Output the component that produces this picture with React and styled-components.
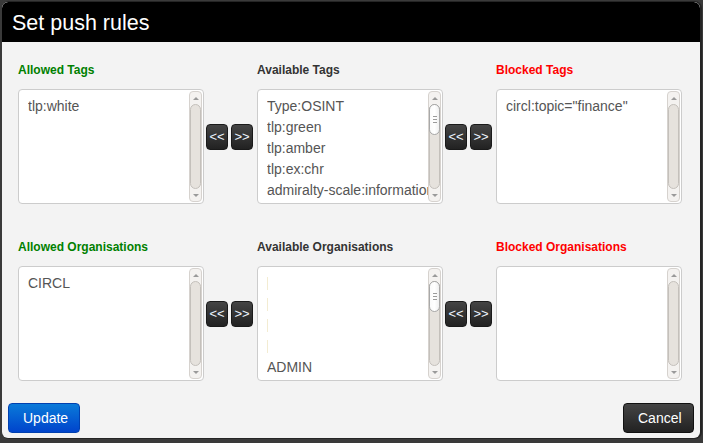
import React from "react";
import styled, { createGlobalStyle } from "styled-components";

const Global = createGlobalStyle`
  html, body { margin: 0; padding: 0; background: #3a3a3a; }
  body { font-family: "Liberation Sans", Arial, Helvetica, sans-serif; }
  #root { width: 703px; height: 443px; overflow: hidden; }
`;

const Modal = styled.div`
  margin: 2px 0 0 2px;
  width: 698px;
  height: 436px;
  background: #f3f3f3;
  border-radius: 6px;
  box-shadow: 1px 0 0 1px rgba(0,0,0,0.35);
  display: flex;
  flex-direction: column;
  overflow: hidden;
`;

const Header = styled.div`
  height: 40px;
  background: #000;
  color: #fff;
  font-size: 21.5px;
  line-height: 42px;
  padding-left: 10px;
  border-radius: 6px 6px 0 0;
`;

const Body = styled.div`
  flex: 1;
  padding: 20px 0 0 16px;
  display: flex;
  flex-direction: column;
  gap: 35px;
`;

const Section = styled.div`
  display: grid;
  grid-template-columns: 186px 53px 186px 53px 186px;
  grid-template-rows: 16px 115px;
  row-gap: 11px;
`;

const Label = styled.div`
  font-size: 12px;
  font-weight: bold;
  line-height: 16px;
  color: ${p => p.$tone === "green" ? "#008000" : p.$tone === "red" ? "#ff0000" : "#333"};
  grid-column: ${p => p.$col};
  grid-row: 1;
`;

const Box = styled.div`
  box-sizing: border-box;
  height: 115px;
  background: #fff;
  border: 1px solid #cccccc;
  border-radius: 4px;
  display: flex;
  grid-row: 2;
`;

const List = styled.div`
  flex: 1;
  min-width: 0;
  overflow: hidden;
  padding: 6px 0 0 9px;
  font-size: 14px;
  line-height: 21px;
  color: #555;
  white-space: nowrap;
  text-overflow: clip;
`;

const Option = styled.div`
  height: 21px;
  display: flex;
  align-items: center;
  overflow: hidden;
`;

const Blank = styled.span`
  display: inline-block;
  width: 1px;
  height: 13px;
  background: #f3ecd2;
`;

const Scroll = styled.div`
  width: 13px;
  margin: 1px 1px 1px 0;
  display: flex;
  flex-direction: column;
  background: #f4f2f0;
  border: 1px solid #d6d2ce;
  border-radius: 4px;
  box-sizing: border-box;
`;

const Arrow = styled.div`
  height: 12px;
  display: flex;
  align-items: center;
  justify-content: center;
  &::after {
    content: "";
    width: 0;
    height: 0;
    border-left: 3px solid transparent;
    border-right: 3px solid transparent;
    ${p => p.$down ? "border-top: 3px solid #9a9a9a;" : "border-bottom: 3px solid #9a9a9a;"}
  }
`;

const Trough = styled.div`
  flex: 1;
  background: #e6e2dd;
  border: 1px solid #c4c0bb;
  border-radius: 6px;
  display: flex;
  flex-direction: column;
`;

const Thumb = styled.div`
  height: 29px;
  margin: -1px -1px 0;
  background: linear-gradient(to right, #fafafa, #ffffff 50%, #f0f0f0);
  border: 1px solid #a8a8a8;
  border-radius: 6px;
  display: flex;
  flex-direction: column;
  align-items: center;
  justify-content: center;
  gap: 2px;
  span { display: block; width: 4px; height: 1px; background: #9a9a9a; }
`;

const Mover = styled.div`
  display: flex;
  gap: 3px;
  padding: 35px 0 0 2px;
  align-self: start;
  grid-row: 2;
`;

const ArrowBtn = styled.div`
  width: 22px;
  height: 26px;
  box-sizing: border-box;
  border-radius: 4px;
  background: linear-gradient(#444, #222);
  border: 1px solid #1a1a1a;
  color: #eef5ff;
  font-size: 13px;
  line-height: 24px;
  text-align: center;
  letter-spacing: 0;
`;

const Footer = styled.div`
  display: flex;
  justify-content: space-between;
  padding: 0 6px 5px 6px;
`;

const Btn = styled.div`
  height: 30px;
  box-sizing: border-box;
  border-radius: 4px;
  padding: 0 14px;
  font-size: 14px;
  line-height: 29px;
  color: #fff;
  background: ${p => p.$primary ? "linear-gradient(#0a7ad9, #0044cc)" : "linear-gradient(#444, #222)"};
  border: 1px solid ${p => p.$primary ? "#0040b0" : "#111"};
  width: ${p => p.$w}px;
  text-align: center;
`;

function Scrollbar({ thumb }) {
  return (
    <Scroll>
      <Arrow />
      <Trough>
        {thumb && (
          <Thumb>
            <span /><span /><span />
          </Thumb>
        )}
      </Trough>
      <Arrow $down />
    </Scroll>
  );
}

function SelectBox({ items, thumb }) {
  return (
    <Box>
      <List>
        {items.map((it, i) => (
          <Option key={i}>{it === "" ? <Blank /> : it}</Option>
        ))}
      </List>
      <Scrollbar thumb={thumb} />
    </Box>
  );
}

function Movers() {
  return (
    <Mover>
      <ArrowBtn>&lt;&lt;</ArrowBtn>
      <ArrowBtn>&gt;&gt;</ArrowBtn>
    </Mover>
  );
}

function Transfer({ what, allowed, available, blocked }) {
  return (
    <Section>
      <Label $tone="green" $col="1">Allowed {what}</Label>
      <Label $col="3">Available {what}</Label>
      <Label $tone="red" $col="5">Blocked {what}</Label>
      <SelectBox items={allowed} />
      <Movers />
      <SelectBox thumb items={available} />
      <Movers />
      <SelectBox items={blocked} />
    </Section>
  );
}

export default function App() {
  return (
    <>
      <Global />
      <Modal>
        <Header>Set push rules</Header>
        <Body>
          <Transfer
            what="Tags"
            allowed={["tlp:white"]}
            available={["Type:OSINT", "tlp:green", "tlp:amber", "tlp:ex:chr", "admiralty-scale:information-credibility"]}
            blocked={['circl:topic="finance"']}
          />
          <Transfer
            what="Organisations"
            allowed={["CIRCL"]}
            available={["", "", "", "", "ADMIN"]}
            blocked={[]}
          />
        </Body>
        <Footer>
          <Btn $primary $w={72}>Update</Btn>
          <Btn $w={71}>Cancel</Btn>
        </Footer>
      </Modal>
    </>
  );
}
